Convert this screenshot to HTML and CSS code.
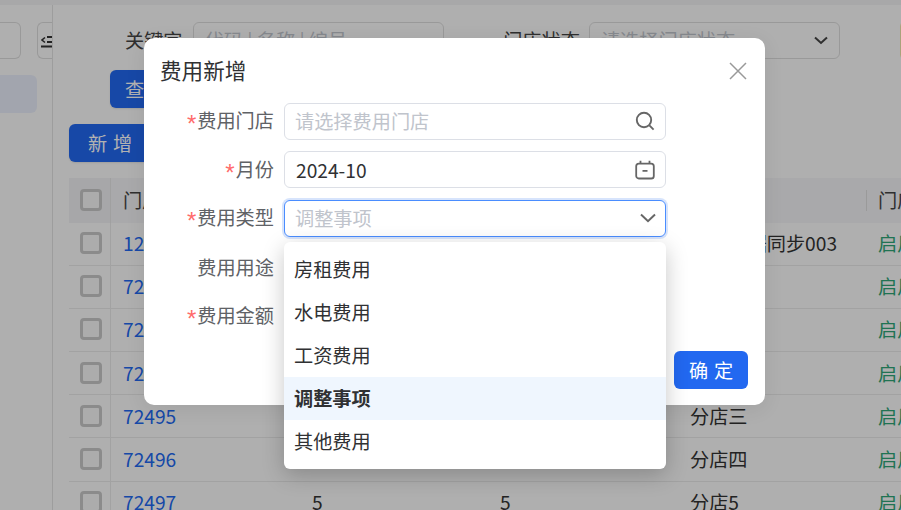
FILE: index.html
```html
<!DOCTYPE html>
<html lang="zh-CN">
<head>
<meta charset="utf-8">
<title>费用新增</title>
<link rel="stylesheet" href="styles.css">
</head>
<body>
<div class="topbar"></div>
<div class="app">
  <aside class="side">
    <div class="side-top">
      <div class="side-input"></div>
      <div class="collapse">
        <svg class="collapse-icon" width="12" height="13" viewBox="0 0 12 13"><path d="M4 2.5 1 5 4 7.5" fill="none" stroke="#333" stroke-width="1.6"/><path d="M6 2h6M6 7h6M0 11.5h12" stroke="#333" stroke-width="1.8"/></svg>
      </div>
    </div>
    <div class="side-active"></div>
  </aside>
  <main class="main">
    <div class="filters">
      <label class="f-label f-key">关键字</label>
      <div class="f-input f-key-input">代码 | 名称 | 编号</div>
      <label class="f-label f-status">门店状态</label>
      <div class="f-input f-status-input">请选择门店状态
        <svg class="f-chev" width="14" height="9" viewBox="0 0 14 9"><path d="M1 1.5 7 7l6-5.5" fill="none" stroke="#444" stroke-width="2"/></svg>
      </div>
      <div class="f-yellow"></div>
    </div>
    <div class="query-row"><button class="btn btn-primary btn-query">查 询</button></div>
    <div class="add-row"><button class="btn btn-primary">新 增</button></div>
    <div class="table">
      <div class="tr th">
        <div class="td td-check"><span class="check"></span></div>
        <div class="td td-code th-text">门店编号</div>
        <div class="td"></div><div class="td"></div><div class="td"></div>
        <div class="td td-last th-text">门店状态</div>
      </div>
      <div class="tr">
        <div class="td td-check"><span class="check"></span></div>
        <div class="td td-code link">12345</div>
        <div class="td"></div><div class="td"></div>
        <div class="td">门店数据同步003</div>
        <div class="td td-last ok">启用</div>
      </div>
      <div class="tr">
        <div class="td td-check"><span class="check"></span></div>
        <div class="td td-code link">72492</div>
        <div class="td"></div><div class="td"></div><div class="td"></div>
        <div class="td td-last ok">启用</div>
      </div>
      <div class="tr">
        <div class="td td-check"><span class="check"></span></div>
        <div class="td td-code link">72493</div>
        <div class="td"></div><div class="td"></div><div class="td"></div>
        <div class="td td-last ok">启用</div>
      </div>
      <div class="tr">
        <div class="td td-check"><span class="check"></span></div>
        <div class="td td-code link">72494</div>
        <div class="td"></div><div class="td"></div><div class="td"></div>
        <div class="td td-last ok">启用</div>
      </div>
      <div class="tr">
        <div class="td td-check"><span class="check"></span></div>
        <div class="td td-code link">72495</div>
        <div class="td"></div><div class="td"></div>
        <div class="td">分店三</div>
        <div class="td td-last ok">启用</div>
      </div>
      <div class="tr">
        <div class="td td-check"><span class="check"></span></div>
        <div class="td td-code link">72496</div>
        <div class="td"></div><div class="td"></div>
        <div class="td">分店四</div>
        <div class="td td-last ok">启用</div>
      </div>
      <div class="tr">
        <div class="td td-check"><span class="check"></span></div>
        <div class="td td-code link">72497</div>
        <div class="td">5</div><div class="td">5</div>
        <div class="td">分店5</div>
        <div class="td td-last ok">启用</div>
      </div>
    </div>
  </main>
</div>

<div class="mask"></div>

<section class="modal">
  <header class="modal-head">
    <h2 class="modal-title">费用新增</h2>
    <svg class="modal-close" width="18" height="18" viewBox="0 0 18 18"><path d="M1 1l16 16M17 1 1 17" stroke="#999" stroke-width="1.5" fill="none"/></svg>
  </header>
  <div class="form">
    <div class="row">
      <label class="lbl"><i class="req">*</i>费用门店</label>
      <div class="ctl"><span class="ph">请选择费用门店</span>
        <svg class="ico" width="20" height="20" viewBox="0 0 20 20"><circle cx="9" cy="9" r="7.2" fill="none" stroke="#666" stroke-width="1.9"/><path d="M14.4 14.4 18.6 18.6" stroke="#666" stroke-width="1.9"/></svg>
      </div>
    </div>
    <div class="row">
      <label class="lbl"><i class="req">*</i>月份</label>
      <div class="ctl"><span class="val">2024-10</span>
        <svg class="ico" width="20" height="20" viewBox="0 0 20 20"><rect x="1.2" y="3.7" width="17.6" height="14.8" rx="2.6" fill="none" stroke="#666" stroke-width="1.8"/><path d="M5.5 0.8v3M14.5 0.8v3M7.5 10.8h5" stroke="#666" stroke-width="1.8" fill="none"/></svg>
      </div>
    </div>
    <div class="row">
      <label class="lbl"><i class="req">*</i>费用类型</label>
      <div class="select-wrap">
        <div class="ctl ctl-focus"><span class="ph">调整事项</span>
          <svg class="ico" width="16" height="10" viewBox="0 0 16 10"><path d="M1 1.5 8 8.2 15 1.5" fill="none" stroke="#666" stroke-width="2"/></svg>
        </div>
        <ul class="dropdown">
          <li class="opt">房租费用</li>
          <li class="opt">水电费用</li>
          <li class="opt">工资费用</li>
          <li class="opt opt-on">调整事项</li>
          <li class="opt">其他费用</li>
        </ul>
      </div>
    </div>
    <div class="row">
      <label class="lbl">费用用途</label>
      <div class="ctl"></div>
    </div>
    <div class="row">
      <label class="lbl"><i class="req">*</i>费用金额</label>
      <div class="ctl"></div>
    </div>
  </div>
  <footer class="modal-foot">
    <button class="btn btn-confirm">确 定</button>
  </footer>
</section>
</body>
</html>
```
FILE: styles.css
```css
* { box-sizing: border-box; }
html, body { margin: 0; height: 510px; overflow: hidden; }
body {
  background: #fbfbfb;
  font-family: "Noto Sans CJK SC", "Noto Sans", sans-serif;
  font-size: 19.2px;
  color: #303133;
  position: relative;
}
.topbar { height: 5px; background: #f1f1f2; }
.app { display: flex; height: 505px; }
.side {
  flex: none;
  width: 53px;
  border-right: 1px solid #e1e1e1;
  padding-top: 17px;
}
.side-top { display: flex; justify-content: space-between; }
.side-input {
  width: 21px; height: 37px;
  border: 1px solid #dcdcdc; border-left: 0;
  border-radius: 0 6px 6px 0;
}
.collapse {
  width: 15px; height: 37px;
  border: 1px solid #dcdcdc; border-right: 0;
  border-radius: 6px 0 0 6px;
  padding: 12px 0 0 3px;
  overflow: hidden;
}
.collapse-icon { display: block; }
.side-active {
  width: 37px; height: 38px;
  margin-top: 16px;
  background: #e9edf9;
  border-radius: 0 6px 6px 0;
}
.main { flex: 1; min-width: 0; padding: 17px 0 0 16px; overflow: hidden; }
.filters { display: flex; align-items: center; height: 37px; }
.f-label { color: #444; flex: none; line-height: 37px; }
.f-key { margin-left: 56px; }
.f-input {
  flex: none; height: 37px; line-height: 35px;
  border: 1px solid #dcdcdc; border-radius: 6px;
  color: #c0c4cc; padding-left: 11px;
  position: relative;
}
.f-key-input { width: 251px; margin-left: 10px; }
.f-status { margin-left: 59.6px; }
.f-status-input { width: 251px; margin-left: 9px; }
.f-chev { position: absolute; right: 11px; top: 13px; }
.f-yellow { flex: none; margin-left: 60px; width: 10px; height: 37px; border: 1px solid #f3e9b0; border-radius: 4px; }
.query-row { margin-top: 11px; padding-left: 41px; }
.add-row { margin-top: 16px; }
.btn {
  display: block;
  height: 38px;
  border: 0;
  border-radius: 6px;
  font: inherit;
  line-height: 38px;
  padding: 0;
  word-spacing: 1.5px;
}
.btn-primary { width: 82px; background: #2268f0; color: #fff; box-shadow: 0 1px 2px rgba(0,0,0,.1); }
.btn-query { width: 74px; }
.table { margin-top: 16px; }
.tr {
  display: grid;
  grid-template-columns: 42px 189px 188px 190px 188px minmax(0, 1fr);
  height: 43.2px;
  border-bottom: 1px solid #e9e9e9;
}
.th { height: 44.5px; background: #f2f3f5; border-bottom: 0; }
.td { display: flex; align-items: center; padding: 0 0 1px 12px; white-space: nowrap; overflow: hidden; color: #333; }
.td-check { padding-left: 11px; border-right: 1px solid #e9e9e9; }
.th .td-check { background: #eff0f2; border-right-color: #e6e6e6; }
.td-last { position: relative; }
.th .td-last::before { content: ""; position: absolute; left: 0; top: 12px; bottom: 12px; width: 1px; background: #ddd; }
.check { width: 22px; height: 22px; border: 3px solid #c8c8c8; border-radius: 4px; background: #f6f6f6; }
.link { color: #2268f0; }
.ok { color: #2ea577; }
.th-text { color: #444; }

.mask { position: absolute; inset: 0; background: rgba(0,0,0,.3); }

.modal {
  position: absolute;
  left: 144px; top: 38px;
  width: 621px; height: 367px;
  background: #fff;
  border-radius: 10px;
  box-shadow: 0 4px 20px rgba(0,0,0,.08);
}
.modal-head { display: flex; justify-content: space-between; align-items: center; height: 65px; padding: 0 18px 3px 16px; }
.modal-close { margin-top: 3px; }
.modal-title { margin: 0; font-size: 21.6px; font-weight: 400; color: #303133; }
.form { display: flex; flex-direction: column; gap: 12px; }
.row { display: flex; align-items: center; height: 36.6px; }
.lbl { flex: none; width: 130px; text-align: right; color: #606266; }
.req { color: #ff6b6b; font-style: normal; font-size: 24px; line-height: 1; font-family: "Liberation Sans", sans-serif; vertical-align: -4px; margin-right: 1px; }
.ctl {
  display: flex; align-items: center; justify-content: space-between;
  width: 382px; height: 37px; margin-left: 10px;
  padding: 0 10px;
  border: 1px solid #dcdfe6; border-radius: 6px;
  background: #fff;
}
.select-wrap { position: relative; }
.ctl-focus { border-color: #4a8dff; box-shadow: 0 0 0 2px rgba(34,104,240,.18); padding-right: 9px; }
.ph { color: #c0c4cc; }
.val { color: #303133; margin-left: 1px; }
.ico { flex: none; }
.dropdown {
  position: absolute;
  left: 10px; top: 42px;
  width: 382px;
  margin: 0; padding: 6px 0;
  list-style: none;
  background: #fff;
  border-radius: 6px;
  box-shadow: 0 6px 22px rgba(0,0,0,.22);
  z-index: 2;
}
.opt { height: 43px; line-height: 43px; padding-left: 10px; color: #303133; }
.opt-on { background: #eff6fe; font-weight: 700; }
.modal-foot { display: flex; justify-content: flex-end; margin-top: 17px; padding-right: 17px; }
.btn-confirm { width: 74px; background: #2268f0; color: #fff; }
```
